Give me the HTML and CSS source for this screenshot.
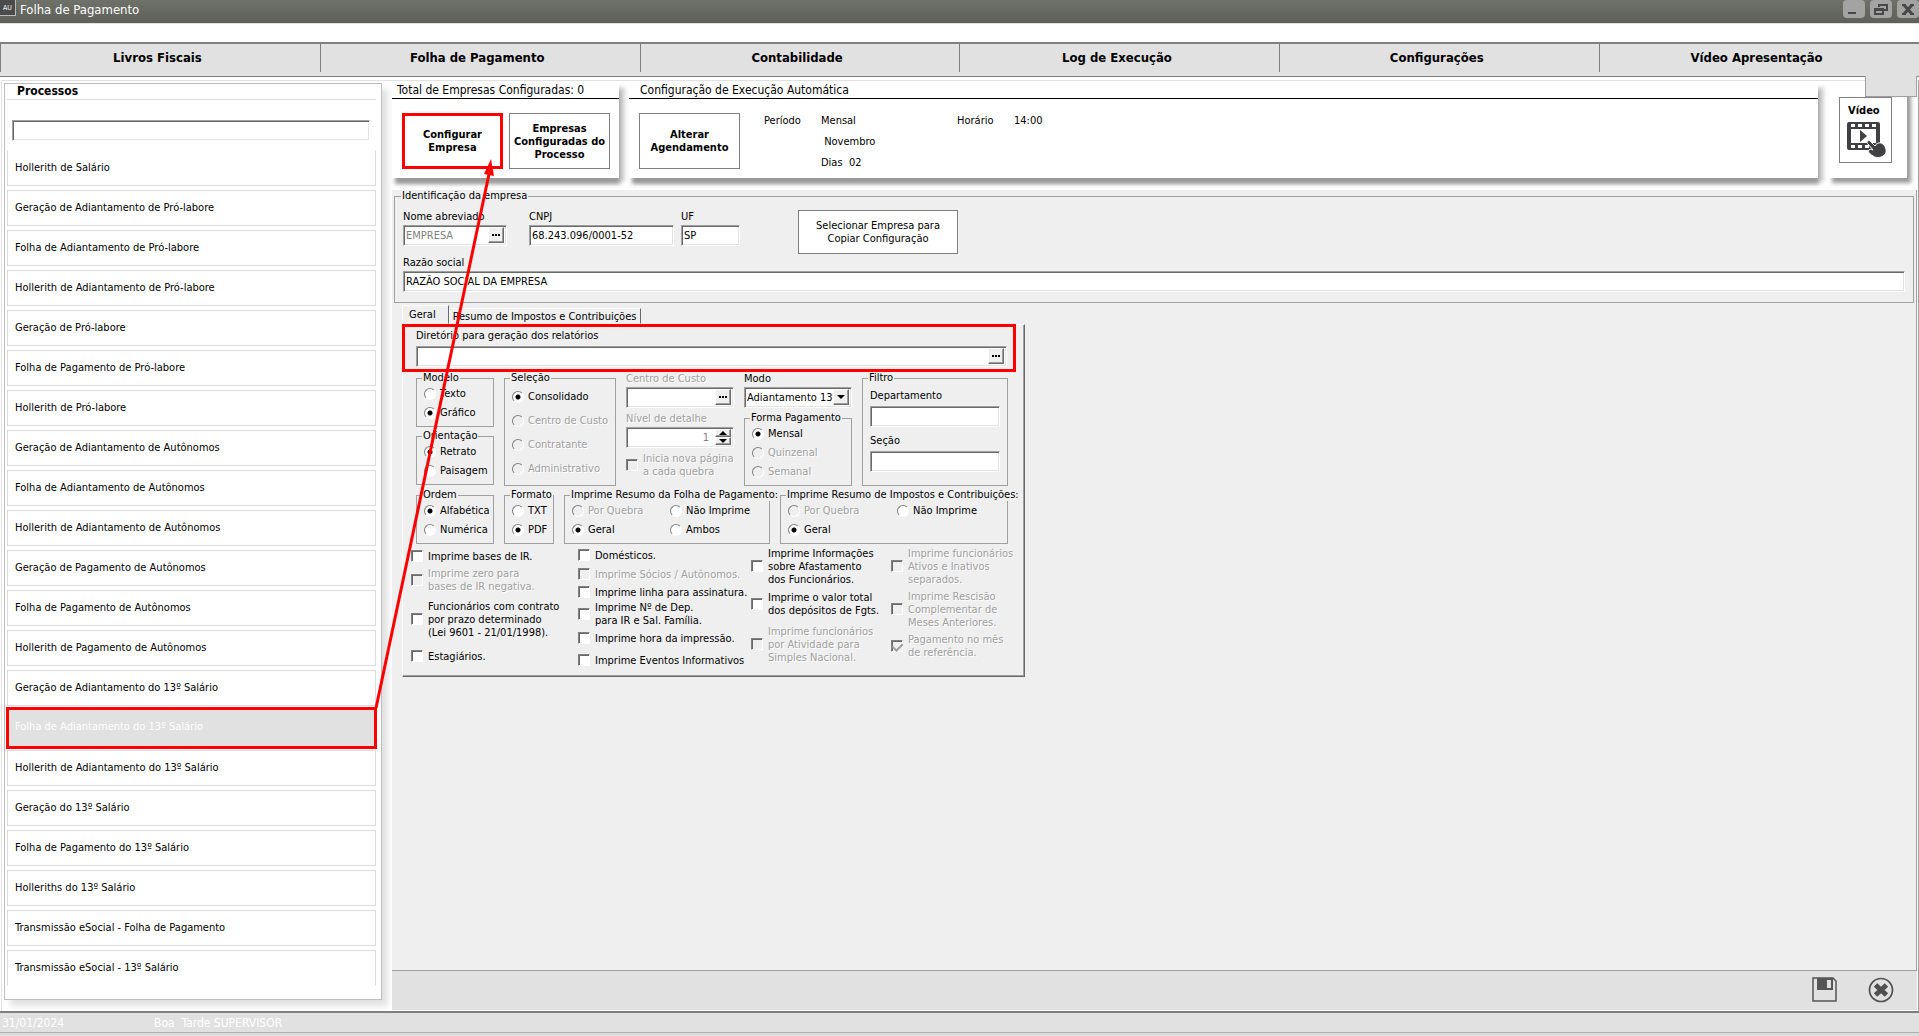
FILE: index.html
```html
<!DOCTYPE html>
<html lang="pt-BR">
<head>
<meta charset="utf-8">
<title>Folha de Pagamento</title>
<link rel="stylesheet" href="styles.css">
</head>
<body>
<header class="titlebar">
  <span class="app-icon">AU</span>
  <h1>Folha de Pagamento</h1>
  <div class="window-buttons">
    <button type="button" aria-label="Minimizar"><svg width="22" height="18" viewBox="0 0 22 18"><path d="M5 12h8v2H5z"/></svg></button>
    <button type="button" aria-label="Restaurar"><svg width="22" height="18" viewBox="0 0 22 18" fill="none" stroke="#484848" stroke-width="2"><path d="M9 7V5h8v5h-3M5 9h8v5H5zM5 10h8"/></svg></button>
    <button type="button" aria-label="Fechar"><svg width="22" height="18" viewBox="0 0 22 18" fill="none" stroke="#484848"><path stroke-width="3" d="M7 5l8 9M15 5l-8 9"/><path stroke-width="2" d="M5 5h4M13 5h4M5 14h4M13 14h4"/></svg></button>
  </div>
</header>
<nav class="modules">
  <a href="#">Livros Fiscais</a>
  <a href="#">Folha de Pagamento</a>
  <a href="#">Contabilidade</a>
  <a href="#">Log de Execução</a>
  <a href="#">Configurações</a>
  <a href="#">Vídeo Apresentação</a>
</nav>
<main class="main">
  <aside class="sidebar">
    <h2>Processos</h2>
    <input class="sunken search" type="text" aria-label="Pesquisar processo">
    <ul>
      <li><a href="#">Hollerith de Salário</a></li>
      <li><a href="#">Geração de Adiantamento de Pró-labore</a></li>
      <li><a href="#">Folha de Adiantamento de Pró-labore</a></li>
      <li><a href="#">Hollerith de Adiantamento de Pró-labore</a></li>
      <li><a href="#">Geração de Pró-labore</a></li>
      <li><a href="#">Folha de Pagamento de Pró-labore</a></li>
      <li><a href="#">Hollerith de Pró-labore</a></li>
      <li><a href="#">Geração de Adiantamento de Autônomos</a></li>
      <li><a href="#">Folha de Adiantamento de Autônomos</a></li>
      <li><a href="#">Hollerith de Adiantamento de Autônomos</a></li>
      <li><a href="#">Geração de Pagamento de Autônomos</a></li>
      <li><a href="#">Folha de Pagamento de Autônomos</a></li>
      <li><a href="#">Hollerith de Pagamento de Autônomos</a></li>
      <li><a href="#">Geração de Adiantamento do 13º Salário</a></li>
      <li class="selected"><a href="#">Folha de Adiantamento do 13º Salário</a></li>
      <li><a href="#">Hollerith de Adiantamento do 13º Salário</a></li>
      <li><a href="#">Geração do 13º Salário</a></li>
      <li><a href="#">Folha de Pagamento do 13º Salário</a></li>
      <li><a href="#">Holleriths do 13º Salário</a></li>
      <li><a href="#">Transmissão eSocial - Folha de Pagamento</a></li>
      <li><a href="#">Transmissão eSocial - 13º Salário</a></li>
    </ul>
  </aside>
  <div class="content">
    <div class="cards">
      <section class="card">
        <h2>Total de Empresas Configuradas: 0</h2>
        <div class="card-body">
          <button type="button" class="flat strong marked">Configurar Empresa</button>
          <button type="button" class="flat strong">Empresas Configuradas do Processo</button>
        </div>
      </section>
      <section class="card card-wide">
        <h2>Configuração de Execução Automática</h2>
        <div class="card-body">
          <button type="button" class="flat strong">Alterar Agendamento</button>
          <dl class="schedule">
            <dt>Período</dt>
            <dd>Mensal<br>&nbsp;Novembro<br>Dias&nbsp; 02</dd>
            <dt>Horário</dt>
            <dd>14:00</dd>
          </dl>
        </div>
      </section>
      <section class="card card-video">
        <button type="button" class="flat video">Vídeo
          <svg width="40" height="36" viewBox="0 0 40 36"><path fill="#404042" fill-rule="evenodd" d="M2 0h29a2 2 0 0 1 2 2v24a2 2 0 0 1-2 2H2a2 2 0 0 1-2-2V2a2 2 0 0 1 2-2zM4 2v3h4V2zM11 2v3h4V2zM18 2v3h4V2zM25 2v3h4V2zM4 7v14h25V7zM4 23v3h4v-3zM11 23v3h4v-3zM18 23v3h4v-3zM25 23v3h4v-3z"/><path fill="#404042" d="M13 8l7 6-7 6z"/><path fill="#404042" stroke="#fff" stroke-width="1" d="M20 20c1-2 3-2 4 0l4 4c2-4 6-4 9-1 3 4 3 9-1 11-3 2-7 2-10 0-2-1-4-3-5-5 1-2 3-2 5-1l-5-6c-1-1-1-1-1-2z"/></svg>
        </button>
      </section>
    </div>
    <form class="workspace">
      <fieldset class="group company">
        <legend>Identificação da empresa</legend>
        <div class="company-row">
          <div class="field w-name"><label for="nome">Nome abreviado</label>
            <div class="sunken combo"><input id="nome" type="text" value="EMPRESA" disabled><button type="button" class="raised" aria-label="Procurar empresa"><span class="dots"></span></button></div></div>
          <div class="field w-cnpj"><label for="cnpj">CNPJ</label><input class="sunken" id="cnpj" type="text" value="68.243.096/0001-52"></div>
          <div class="field w-uf"><label for="uf">UF</label><input class="sunken" id="uf" type="text" value="SP"></div>
          <button type="button" class="flat copy">Selecionar Empresa para Copiar Configuração</button>
        </div>
        <div class="field"><label for="razao">Razão social</label><input class="sunken" id="razao" type="text" value="RAZÃO SOCIAL DA EMPRESA"></div>
      </fieldset>
      <div class="tabs">
        <button type="button" class="tab tab-on">Geral</button>
        <button type="button" class="tab">Resumo de Impostos e Contribuições</button>
      </div>
      <div class="sheet">
        <div class="field directory"><label for="dir">Diretório para geração dos relatórios</label>
          <div class="sunken combo"><input id="dir" type="text"><button type="button" class="raised" aria-label="Procurar diretório"><span class="dots"></span></button></div></div>
        <div class="options">
          <div class="stack">
            <fieldset class="group list"><legend>Modelo</legend>
              <label><input type="radio" name="modelo">Texto</label>
              <label><input type="radio" name="modelo" checked>Gráfico</label></fieldset>
            <fieldset class="group list"><legend>Orientação</legend>
              <label><input type="radio" name="orientacao" checked>Retrato</label>
              <label><input type="radio" name="orientacao">Paisagem</label></fieldset>
          </div>
          <fieldset class="group list loose"><legend>Seleção</legend>
            <label><input type="radio" name="selecao" checked>Consolidado</label>
            <label class="off"><input type="radio" name="selecao" disabled>Centro de Custo</label>
            <label class="off"><input type="radio" name="selecao" disabled>Contratante</label>
            <label class="off"><input type="radio" name="selecao" disabled>Administrativo</label></fieldset>
          <div class="stack plain">
            <div class="field off"><label for="custo">Centro de Custo</label>
              <div class="sunken combo"><input id="custo" type="text" disabled><button type="button" class="raised" aria-label="Procurar centro de custo"><span class="dots"></span></button></div></div>
            <div class="field off"><label for="nivel">Nível de detalhe</label>
              <div class="sunken combo"><input id="nivel" class="number" type="text" value="1" disabled><div class="spin"><button type="button" class="raised" aria-label="Aumentar"><svg width="8" height="4" viewBox="0 0 8 4"><path d="M0 4l4-4 4 4z"/></svg></button><button type="button" class="raised" aria-label="Diminuir"><svg width="8" height="4" viewBox="0 0 8 4"><path d="M0 0l4 4 4-4z"/></svg></button></div></div></div>
            <label class="check off"><input type="checkbox" disabled><span>Inicia nova página<br>a cada quebra</span></label>
          </div>
          <div class="stack plain">
            <div class="field"><label for="modo">Modo</label>
              <div class="sunken combo"><select id="modo"><option>Adiantamento 13º</option></select><span class="raised arrow"><svg width="8" height="4" viewBox="0 0 8 4"><path d="M0 0l4 4 4-4z"/></svg></span></div></div>
            <fieldset class="group list"><legend>Forma Pagamento</legend>
              <label><input type="radio" name="forma" checked>Mensal</label>
              <label class="off"><input type="radio" name="forma" disabled>Quinzenal</label>
              <label class="off"><input type="radio" name="forma" disabled>Semanal</label></fieldset>
          </div>
          <fieldset class="group filter"><legend>Filtro</legend>
            <div class="field"><label for="depto">Departamento</label><input class="sunken" id="depto" type="text"></div>
            <div class="field"><label for="secao">Seção</label><input class="sunken" id="secao" type="text"></div></fieldset>
        </div>
        <div class="outputs">
          <fieldset class="group list"><legend>Ordem</legend>
            <label><input type="radio" name="ordem" checked>Alfabética</label>
            <label><input type="radio" name="ordem">Numérica</label></fieldset>
          <fieldset class="group list"><legend>Formato</legend>
            <label><input type="radio" name="formato">TXT</label>
            <label><input type="radio" name="formato" checked>PDF</label></fieldset>
          <fieldset class="group pairs"><legend>Imprime Resumo da Folha de Pagamento:</legend>
            <label class="off"><input type="radio" name="folha" disabled>Por Quebra</label>
            <label><input type="radio" name="folha">Não Imprime</label>
            <label><input type="radio" name="folha" checked>Geral</label>
            <label><input type="radio" name="folha">Ambos</label></fieldset>
          <fieldset class="group pairs pairs-wide"><legend>Imprime Resumo de Impostos e Contribuições:</legend>
            <label class="off"><input type="radio" name="impostos" disabled>Por Quebra</label>
            <label><input type="radio" name="impostos">Não Imprime</label>
            <label><input type="radio" name="impostos" checked>Geral</label></fieldset>
        </div>
        <div class="checks">
          <div class="checks-base">
            <label class="check"><input type="checkbox"><span>Imprime bases de IR.</span></label>
            <label class="check off"><input type="checkbox" disabled><span>Imprime zero para<br>bases de IR negativa.</span></label>
            <label class="check"><input type="checkbox"><span>Funcionários com contrato<br>por prazo determinado<br>(Lei 9601 - 21/01/1998).</span></label>
            <label class="check"><input type="checkbox"><span>Estagiários.</span></label>
          </div>
          <div class="checks-print">
            <label class="check"><input type="checkbox"><span>Domésticos.</span></label>
            <label class="check off"><input type="checkbox" disabled><span>Imprime Sócios / Autônomos.</span></label>
            <label class="check"><input type="checkbox"><span>Imprime linha para assinatura.</span></label>
            <label class="check"><input type="checkbox"><span>Imprime Nº de Dep.<br>para IR e Sal. Família.</span></label>
            <label class="check"><input type="checkbox"><span>Imprime hora da impressão.</span></label>
            <label class="check"><input type="checkbox"><span>Imprime Eventos Informativos</span></label>
          </div>
          <div class="checks-info">
            <label class="check"><input type="checkbox"><span>Imprime Informações<br>sobre Afastamento<br>dos Funcionários.</span></label>
            <label class="check"><input type="checkbox"><span>Imprime o valor total<br>dos depósitos de Fgts.</span></label>
            <label class="check off"><input type="checkbox" disabled><span>Imprime funcionários<br>por Atividade para<br>Simples Nacional.</span></label>
          </div>
          <div class="checks-staff">
            <label class="check off"><input type="checkbox" disabled><span>Imprime funcionários<br>Ativos e Inativos<br>separados.</span></label>
            <label class="check off"><input type="checkbox" disabled><span>Imprime Rescisão<br>Complementar de<br>Meses Anteriores.</span></label>
            <label class="check off"><input type="checkbox" checked disabled><span>Pagamento no mês<br>de referência.</span></label>
          </div>
        </div>
      </div>
    </form>
    <div class="actions">
      <button type="button" aria-label="Salvar"><svg width="26" height="26" viewBox="0 0 26 26"><path fill="none" stroke="#555" stroke-width="1.5" d="M2 1h19l3 3v20H1V1z"/><path fill="#555" fill-rule="evenodd" d="M5 1h16v12H5zM15 3v8h4V3z"/></svg></button>
      <button type="button" aria-label="Cancelar"><svg width="26" height="26" viewBox="0 0 26 26"><circle cx="13" cy="13" r="11.5" fill="none" stroke="#505050" stroke-width="1.7"/><path stroke="#505050" stroke-width="5" d="M7.500 8l11 10M18.500 8l-11 10"/></svg></button>
    </div>
  </div>
</main>
<footer class="status"><span>31/01/2024</span><span>Boa&nbsp; Tarde SUPERVISOR</span></footer>
<svg class="pointer" width="140" height="570" viewBox="0 0 140 570" aria-hidden="true"><path d="M6 556L119 22" stroke="#f00" stroke-width="3"/><path fill="#f00" d="M121 7l3 17-10-2z"/></svg>
</body>
</html>
```
FILE: styles.css
```css
* { box-sizing: border-box; }
body {
  margin: 0;
  min-height: 100vh;
  display: flex;
  flex-direction: column;
  position: relative;
  background: #fff;
  color: #000;
  font: 11px/13px Tahoma, "DejaVu Sans Condensed", "Noto Sans", sans-serif;
}
button, input, select { font: inherit; color: inherit; margin: 0; padding: 0; }
button { cursor: pointer; }
h1, h2, ul, dl, dd { margin: 0; padding: 0; font: inherit; }
ul { list-style: none; }
a { color: inherit; text-decoration: none; }
svg { display: block; }

.titlebar {
  height: 24px;
  display: flex;
  align-items: flex-start;
  gap: 4px;
  background: linear-gradient(#6f716b, #5e5f59);
  border-bottom: 1px solid #e1e1e1;
  color: #fff;
}
.titlebar h1 { font-size: 13px; line-height: 20px; flex: 1; }
.app-icon {
  width: 16px;
  height: 16px;
  background: #4b4b4b;
  border-right: 1px solid #bbb;
  border-bottom: 1px solid #bbb;
  font-size: 7px;
  line-height: 16px;
  text-align: center;
}
.window-buttons { display: flex; gap: 5px; }
.window-buttons button {
  width: 22px;
  height: 18px;
  border: 0;
  border-radius: 4px;
  background: #a3a3a3;
  fill: #484848;
}

.modules {
  display: flex;
  height: 35px;
  margin-top: 18px;
  border-top: 2px solid #7f7f7f;
  border-bottom: 1px solid #7f7f7f;
  background: #e1e1e1;
}
.modules a {
  flex: 1;
  height: 28px;
  padding-right: 6px;
  border-left: 1px solid #7f7f7f;
  font-size: 13px;
  font-weight: bold;
  line-height: 27px;
  text-align: center;
}

.main {
  flex: 1;
  display: flex;
  margin: 3px 0 0 1px;
  padding: 2px 1px 1px 2px;
  border: 1px solid #e1e1e1;
  border-right-color: #a0a0a0;
  border-bottom: 0;
}

.sidebar {
  flex: none;
  align-self: flex-start;
  width: 378px;
  padding: 0 5px 13px 2px;
  border: 1px solid #bdbdbd;
  box-shadow: 6px 6px 6px #e2e2e2;
}
.sidebar h2 {
  padding-left: 10px;
  border-bottom: 1px solid #dcdcdc;
  font-size: 12px;
  font-weight: bold;
  line-height: 15px;
}
.sidebar li {
  height: 36px;
  margin-bottom: 4px;
  padding-left: 7px;
  border: 1px solid #dcdcdc;
  line-height: 34px;
}
.sidebar li:first-child { border-top-color: #fff; }
.sidebar li:last-child { border-bottom-color: #fff; margin: 0; }
.sidebar li.selected {
  height: 42px;
  margin: -3px -1px 1px;
  border: 3px solid #f00;
  padding-left: 6px;
  background: #e1e1e1;
  color: #fff;
}

.content { flex: 1; min-width: 0; display: flex; flex-direction: column; margin-left: 10px; }
.cards { display: flex; gap: 10px; margin-right: 10px; height: 107px; }
.card {
  flex: none;
  width: 227px;
  height: 95px;
  background: #fff;
  box-shadow: 2px 7px 4px -1px #9a9a9a, 6px 4px 4px #d4d4d4;
}
.card h2 {
  padding-left: 5px;
  border-bottom: 1px solid #000;
  font-size: 12px;
  line-height: 15px;
}
.card-wide { flex: 1; }
.card-wide h2 { padding-left: 11px; }
.card-body { display: flex; gap: 6px; padding: 14px 9px 0 10px; }
.card-video {
  position: relative;
  width: 79px;
  padding: 14px 0 0 11px;
  box-shadow: 4px 5px 4px #9a9a9a;
}
.card-video::before {
  content: "";
  position: absolute;
  left: 37px;
  top: -7px;
  width: 50px;
  height: 20px;
  background: #e1e1e1;
  border: 1px solid #a0a0a0;
  border-top: 0;
}
.flat { border: 1px solid #7f7f7f; background: #fff; }
.strong { width: 101px; height: 56px; font-weight: bold; }
.marked { border: 3px solid #f00; }
.video {
  display: flex;
  flex-direction: column;
  align-items: flex-start;
  gap: 5px;
  width: 53px;
  height: 66px;
  padding: 6px 0 0 8px;
  font-weight: bold;
}
.video svg { margin-left: -1px; }
.schedule { display: flex; margin: -3px 0 0 18px; line-height: 21px; }
.schedule dt { width: 57px; }
.schedule dd { width: 136px; }

.workspace {
  flex: 1;
  padding: 0 2px;
  background: #efefef;
  border-right: 1px solid #a0a0a0;
}
.group {
  min-width: 0;
  margin: 0;
  padding: 0 8px;
  border: 1px solid #a0a0a0;
}
.group legend { margin-left: -2px; padding: 0 1px; white-space: nowrap; line-height: 12px; }
.sunken {
  display: block;
  width: 100%;
  height: 21px;
  padding: 0 2px;
  border: 1px solid;
  border-color: #a0a0a0 #fff #fff #a0a0a0;
  background: #fff;
  box-shadow: inset 1px 1px #696969, inset -1px -1px #e3e3e3;
  outline: 0;
}
.sidebar .search { width: 358px; margin: 20px 5px 9px; }
.combo { display: flex; padding: 1px 2px 2px; align-items: stretch; }
.combo input, .combo select {
  flex: 1;
  min-width: 0;
  border: 0;
  background: none;
  outline: 0;
  appearance: none;
}
.combo input:disabled { color: #808080; }
.raised {
  flex: none;
  width: 16px;
  display: grid;
  place-items: center;
  border: 1px solid;
  border-color: #fff #696969 #696969 #fff;
  background: #efefef;
  box-shadow: inset -1px -1px #a0a0a0;
}
.dots { width: 8px; height: 2px; background: repeating-linear-gradient(90deg, #000 0 2px, transparent 2px 3px); }
.field label { display: block; padding-bottom: 2px; }

.company { padding: 8px 8px 10px; }
.company .group legend { margin-left: -3px; }
.company-row { display: flex; margin-bottom: 2px; }
.w-name { width: 104px; margin-right: 22px; }
.w-cnpj { width: 145px; margin-right: 7px; }
.w-uf { width: 59px; margin-right: 58px; }
.copy { width: 160px; height: 44px; padding: 0 10px; }

.tabs { display: flex; align-items: flex-end; padding: 2px 0 0 8px; }
.tab {
  height: 16px;
  padding: 0 4px 0 3px;
  border: 1px solid;
  border-color: #fff #696969 transparent #fff;
  background: #efefef;
  line-height: 13px;
}
.tab-on { height: 19px; padding: 0 12px 0 6px; }
.sheet {
  width: 623px;
  margin-left: 8px;
  padding: 0 9px 4px;
  border: 1px solid;
  border-color: #fff #696969 #696969 #fff;
  box-shadow: inset -1px -1px #a0a0a0;
}
.directory {
  width: 614px;
  margin: -1px 0 0 -10px;
  padding: 2px 6px 2px 11px;
  border: 3px solid #f00;
}
.directory label { padding-bottom: 4px; }
.options {
  display: grid;
  grid-template-columns: 78px 112px 108px 108px 146px;
  gap: 10px;
  padding-left: 4px;
}
.outputs {
  display: grid;
  grid-template-columns: 78px 50px 206px 228px;
  gap: 10px;
  padding: 3px 0 0 4px;
}
.stack { display: flex; flex-direction: column; gap: 3px; }
.plain { gap: 4px; }
.list { display: flex; flex-direction: column; gap: 6px; padding: 3px 7px 7px; }
.list label, .pairs label { display: flex; align-items: center; gap: 4px; white-space: nowrap; }
.loose { gap: 11px; padding-top: 6px; }
.filter { padding: 0 7px; }
.filter .field { padding: 5px 0 2px; }
.filter .field label { padding-bottom: 4px; }
.pairs {
  display: grid;
  grid-template-columns: 98px auto;
  row-gap: 6px;
  justify-content: start;
  padding: 3px 7px 7px;
}
.pairs-wide { grid-template-columns: 109px auto; }
.off { color: #a0a0a0; text-shadow: 1px 1px #fff; }
.number { text-align: right; padding-right: 6px; }
.spin { display: grid; width: 16px; }
.spin .raised { min-height: 0; }
input[type="radio"], input[type="checkbox"] {
  appearance: none;
  flex: none;
  width: 12px;
  height: 12px;
  border: 1px solid;
  border-color: #808080 #fff #fff #808080;
  background: #fff;
}
input[type="radio"] { border-radius: 50%; }
input[type="radio"]:checked { background: radial-gradient(circle, #000 2px, #fff 3px); }
input[type="checkbox"] { box-shadow: inset 1px 1px #696969; }
input:disabled[type="radio"], input:disabled[type="checkbox"] { background: #efefef; }
input[type="checkbox"]:checked { display: grid; place-items: center; }
input[type="checkbox"]:checked::after {
  content: "";
  width: 5px;
  height: 8px;
  margin-bottom: 2px;
  border: solid #a0a0a0;
  border-width: 0 2px 2px 0;
  transform: rotate(45deg);
}
.check { display: flex; align-items: center; gap: 5px; white-space: nowrap; }
.checks { display: grid; grid-template-columns: 167px 173px 140px auto; margin: 2px 0 0 -1px; }
.checks > div { display: grid; align-content: start; }
.checks-base { grid-template-rows: 20px 28px 50px 24px; }
.checks-print { grid-template-rows: 18px 20px 16px 28px 20px 24px; }
.checks-info { grid-template-rows: 40px 36px 44px; }
.checks-staff { grid-template-rows: 40px 46px 28px; }

.actions {
  display: flex;
  justify-content: flex-end;
  gap: 30px;
  height: 40px;
  padding: 6px 23px 0 0;
  border-top: 1px solid #a0a0a0;
  background: #e1e1e1;
}
.actions button { width: 26px; height: 26px; border: 0; background: none; }
.status {
  display: flex;
  height: 25px;
  padding: 3px 2px 0;
  border-top: 2px solid #7f7f7f;
  background: linear-gradient(#e1e1e1 19px, #b0b0b0 19px 20px, #dcdcdc 20px);
  color: #fff;
  font-size: 12px;
  line-height: 15px;
}
.status span:first-child { width: 152px; }
.pointer { position: absolute; left: 370px; top: 152px; pointer-events: none; }
```
